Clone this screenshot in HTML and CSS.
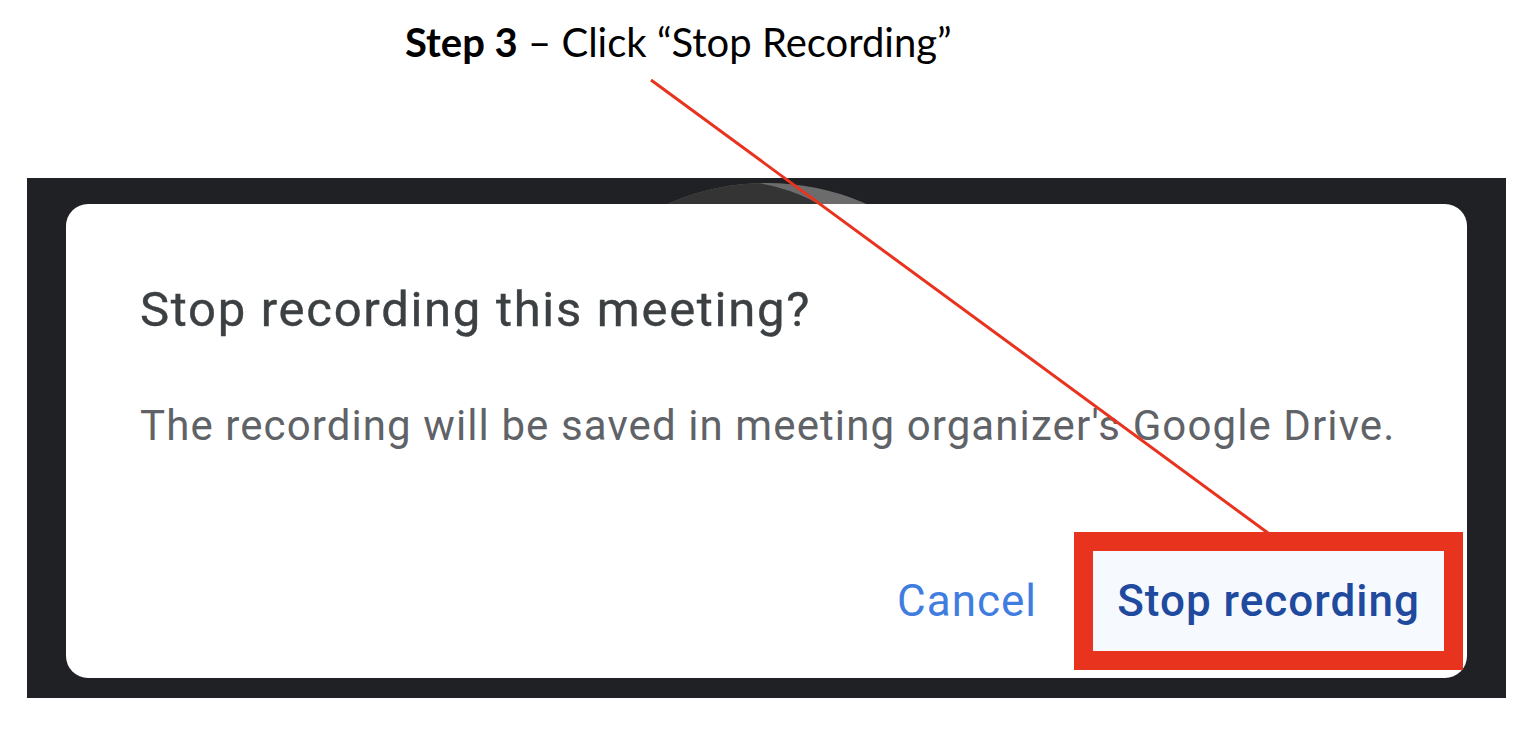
FILE: index.html
```html
<!DOCTYPE html>
<html>
<head>
<meta charset="utf-8">
<link rel="stylesheet" href="styles.css">
</head>
<body>
<div class="page">
  <h1 class="step"><b>Step 3</b> – Click “Stop Recording”</h1>
  <div class="frame">
    <div class="peek"><div class="avatar"><div class="hair"></div></div></div>
    <div class="dialog">
      <h2 class="title">Stop recording this meeting?</h2>
      <p class="body">The recording will be saved in meeting organizer's Google Drive.</p>
      <div class="actions">
        <span class="btn cancel">Cancel</span>
        <span class="highlight"><span class="btn stop">Stop recording</span></span>
      </div>
    </div>
  </div>
  <svg class="pointer" width="1540" height="740" viewBox="0 0 1540 740"><line x1="651" y1="80" x2="1268" y2="533" stroke="#e8331f" stroke-width="3"/></svg>
</div>
</body>
</html>
```
FILE: styles.css
```css
html, body { margin: 0; padding: 0; background: #fff; }
.page { position: relative; width: 1540px; height: 740px; overflow: hidden; }
.step {
  margin: 0;
  padding: 16px 0 0 405px;
  height: 160px;
  box-sizing: border-box;
  font-family: "Lato", "Open Sans", sans-serif;
  font-weight: 400;
  font-size: 40px;
  line-height: 52px;
  color: #000;
  text-align: left;
}
.step b { font-weight: 700; }
.frame {
  position: relative;
  margin: 18px 0 0 27px;
  width: 1479px;
  height: 520px;
  background: #202124;
  box-sizing: border-box;
  padding: 26px 39px 20px 39px;
  overflow: hidden;
}
.peek {
  position: absolute;
  left: 0; top: 0;
  width: 100%;
  height: 40px;
  overflow: hidden;
}
.avatar {
  position: absolute;
  left: 492px;
  top: 5px;
  width: 496px;
  height: 496px;
  border-radius: 50%;
  background: #6c6c6c;
  overflow: hidden;
}
.hair {
  position: absolute;
  left: 24px; top: -6px;
  width: 300px; height: 120px;
  border-radius: 50%;
  background: #343434;
}
.dialog {
  position: relative;
  background: #fff;
  border-radius: 22px;
  height: 474px;
  box-sizing: border-box;
  padding: 74px 0 0 74px;
  font-family: "Roboto", sans-serif;
}
.title {
  margin: 0;
  font-weight: 400;
  font-size: 49px;
  line-height: 64px;
  letter-spacing: 1.7px;
  color: #3c4043;
  -webkit-text-stroke: 0.4px #3c4043;
}
.body {
  margin: 56px 0 0 0;
  font-size: 42px;
  line-height: 56px;
  letter-spacing: 1.1px;
  color: #5f6368;
}
.actions {
  display: flex;
  justify-content: flex-end;
  align-items: center;
  margin-top: 78px;
  margin-right: 4px;
}
.btn { font-size: 44px; font-weight: 400; letter-spacing: 1px; }
.cancel { color: #3f7de0; margin-right: 37px; }
.highlight {
  display: block;
  border: 19px solid #e8331f;
  background: #f6f9fe;
}
.stop {
  display: block;
  width: 351px;
  height: 100px;
  box-sizing: border-box;
  color: #1f4a9e;
  font-weight: 500;
  line-height: 100px;
  text-align: center;
}
.pointer { position: absolute; left: 0; top: 0; pointer-events: none; }
```
